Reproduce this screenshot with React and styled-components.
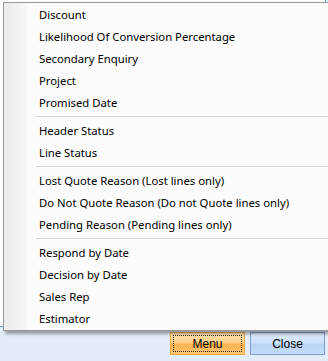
import React from "react";
import styled, { createGlobalStyle } from "styled-components";

const Global = createGlobalStyle`
  html, body {
    margin: 0;
    padding: 0;
    background: #e3edfa;
  }
  #root {
    width: 328px;
    height: 361px;
  }
`;

const S = {
  Screen: styled.div`
    position: relative;
    width: 328px;
    height: 361px;
    overflow: hidden;
    display: flex;
    flex-direction: column;
    background: #e3edfa;
    font-family: "Noto Sans", "Open Sans", sans-serif;
  `,
  Panel: styled.div`
    width: 325px;
    height: 326px;
    flex: none;
    background: #ffffff;
    border-right: 1px solid #6a9ad6;
    border-bottom: 1px solid #6a9ad6;
  `,
  ButtonBar: styled.div`
    display: flex;
    justify-content: flex-end;
    gap: 5px;
    padding: 5px 3px 0 0;
  `,
  Button: styled.button`
    width: 75px;
    height: 23px;
    padding: 2px;
    box-sizing: border-box;
    font-family: "Liberation Sans", Arial, sans-serif;
    font-size: 12px;
    color: #000;
    border: 1px solid ${(p) => (p.$active ? "#e9a94c" : "#7e9fcb")};
    background: ${(p) =>
      p.$active
        ? "linear-gradient(#ffe3b4 0%, #ffcf85 45%, #ffb24c 55%, #ffc877 100%)"
        : "linear-gradient(#dbe9fb 0%, #cfe1f9 45%, #b9d4f6 55%, #c3dbf8 100%)"};
  `,
  FocusRect: styled.span`
    display: flex;
    align-items: center;
    justify-content: center;
    height: 100%;
    border: 1px dotted #3a2a10;
    box-sizing: border-box;
  `,
  Menu: styled.div`
    position: absolute;
    top: 2px;
    left: 3px;
    width: 340px;
    padding: 0 0 1px;
    background: linear-gradient(
      to right,
      #ebebeb 0px,
      #f7f7f7 22px,
      #fcfcfc 25px,
      #fcfcfc 100%
    );
    border: 1px solid #979797;
    box-shadow: 2px 3px 3px rgba(0, 0, 0, 0.35);
  `,
  Item: styled.div`
    height: 22px;
    display: flex;
    align-items: center;
    padding-left: 35px;
    font-size: 11.3px;
    color: #000;
    white-space: nowrap;
  `,
  Separator: styled.div`
    height: 6px;
    display: flex;
    align-items: center;
    margin-left: 32px;
    &::after {
      content: "";
      flex: 1;
      height: 1px;
      background: #d5d5d5;
      box-shadow: 0 1px 0 #ffffff;
    }
  `,
};

const groups = [
  [
    "Discount",
    "Likelihood Of Conversion Percentage",
    "Secondary Enquiry",
    "Project",
    "Promised Date",
  ],
  ["Header Status", "Line Status"],
  [
    "Lost Quote Reason (Lost lines only)",
    "Do Not Quote Reason (Do not Quote lines only)",
    "Pending Reason (Pending lines only)",
  ],
  ["Respond by Date", "Decision by Date", "Sales Rep", "Estimator"],
];

function App() {
  return (
    <>
      <Global />
      <S.Screen>
        <S.Panel />
        <S.ButtonBar>
          <S.Button $active>
            <S.FocusRect>Menu</S.FocusRect>
          </S.Button>
          <S.Button>Close</S.Button>
        </S.ButtonBar>
        <S.Menu>
          {groups.map((group, i) => (
            <React.Fragment key={i}>
              {i > 0 && <S.Separator />}
              {group.map((label) => (
                <S.Item key={label}>{label}</S.Item>
              ))}
            </React.Fragment>
          ))}
        </S.Menu>
      </S.Screen>
    </>
  );
}

export default App;
